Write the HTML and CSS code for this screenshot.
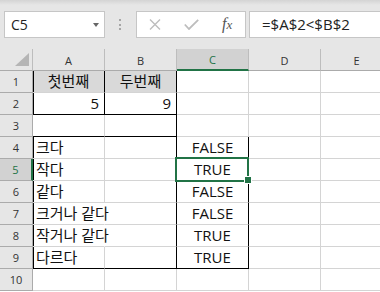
FILE: index.html
```html
<!DOCTYPE html>
<html lang="ko">
<head>
<meta charset="utf-8">
<link rel="stylesheet" href="styles.css">
</head>
<body>
<div class="app">
  <div class="toolbar">
    <div class="namebox"><span class="name">C5</span><span class="caret"></span></div>
    <div class="grip"><i></i><i></i><i></i></div>
    <div class="fxbtns">
      <svg class="ico-x" width="12" height="11" viewBox="0 0 12 11"><path d="M1 0.5 L11 10.5 M11 0.5 L1 10.5" stroke="#bdbdbd" stroke-width="1.4" fill="none"/></svg>
      <svg class="ico-ok" width="15" height="11" viewBox="0 0 15 11"><path d="M0.8 5.5 L5 10 L14.2 0.8" stroke="#bdbdbd" stroke-width="1.8" fill="none"/></svg>
      <span class="fx">f<span class="fx-x">x</span></span>
    </div>
    <div class="formula">=$A$2&lt;$B$2</div>
  </div>
  <div class="sheet">
    <div class="ch corner"><span class="tri"></span></div>
    <div class="ch">A</div>
    <div class="ch">B</div>
    <div class="ch sel">C</div>
    <div class="ch">D</div>
    <div class="ch">E</div>

    <div class="rh">1</div>
    <div class="c hd bl br">첫번째</div>
    <div class="c hd br">두번째</div>
    <div class="c"></div><div class="c"></div><div class="c"></div>

    <div class="rh">2</div>
    <div class="c num bl br bb">5</div>
    <div class="c num br bb">9</div>
    <div class="c"></div><div class="c"></div><div class="c"></div>

    <div class="rh">3</div>
    <div class="c bb"></div>
    <div class="c bb br"></div>
    <div class="c"></div><div class="c"></div><div class="c"></div>

    <div class="rh">4</div>
    <div class="c txt bl">크다</div>
    <div class="c br"></div>
    <div class="c ctr br">FALSE</div>
    <div class="c"></div><div class="c"></div>

    <div class="rh sel">5</div>
    <div class="c txt bl">작다</div>
    <div class="c br"></div>
    <div class="c ctr br active">TRUE</div>
    <div class="c"></div><div class="c"></div>

    <div class="rh">6</div>
    <div class="c txt bl">같다</div>
    <div class="c br"></div>
    <div class="c ctr br">FALSE</div>
    <div class="c"></div><div class="c"></div>

    <div class="rh">7</div>
    <div class="c txt bl over">크거나 같다</div>
    <div class="c br"></div>
    <div class="c ctr br">FALSE</div>
    <div class="c"></div><div class="c"></div>

    <div class="rh">8</div>
    <div class="c txt bl over">작거나 같다</div>
    <div class="c br"></div>
    <div class="c ctr br">TRUE</div>
    <div class="c"></div><div class="c"></div>

    <div class="rh">9</div>
    <div class="c txt bl bb">다르다</div>
    <div class="c br bb"></div>
    <div class="c ctr br bb">TRUE</div>
    <div class="c"></div><div class="c"></div>

    <div class="rh">10</div>
    <div class="c"></div><div class="c"></div><div class="c"></div><div class="c"></div><div class="c"></div>
  </div>
</div>
</body>
</html>
```
FILE: styles.css
```css
* { box-sizing: border-box; }
html, body { margin: 0; padding: 0; }
body {
  width: 380px;
  height: 292px;
  overflow: hidden;
  background: #ffffff;
  font-family: "Open Sans", "Noto Sans CJK KR", sans-serif;
}
.app { width: 380px; height: 292px; overflow: hidden; }

.toolbar {
  height: 49px;
  display: flex;
  align-items: flex-start;
  padding-top: 11px;
  background: linear-gradient(#d4d4d4 0px, #e6e6e6 5px, #e6e6e6 100%);
}
.namebox {
  margin-left: 4px;
  width: 101px;
  height: 27px;
  background: #fff;
  border: 1px solid #c6c6c6;
  display: flex;
  align-items: center;
  padding-left: 6px;
  position: relative;
}
.name { font-size: 14px; color: #222; line-height: 1; }
.caret {
  position: absolute;
  left: 88px;
  top: 11px;
  width: 0; height: 0;
  border-left: 3.5px solid transparent;
  border-right: 3.5px solid transparent;
  border-top: 4px solid #666;
}
.grip {
  width: 31px;
  height: 27px;
  display: flex;
  flex-direction: column;
  align-items: center;
  justify-content: center;
  gap: 2.5px;
  padding-right: 1px;
}
.grip i { display: block; width: 2px; height: 2px; background: #a6a6a6; }
.fxbtns {
  width: 110px;
  height: 27px;
  background: #fff;
  border: 1px solid #c6c6c6;
  display: flex;
  align-items: center;
  padding-left: 12px;
}
.ico-x { margin-top: 0px; }
.ico-ok { margin-left: 23px; }
.fx {
  margin-left: 23px;
  font-family: "Liberation Serif", serif;
  font-style: italic;
  font-size: 16px;
  color: #555;
  line-height: 1;
  margin-top: -2px;
}
.fx-x { font-size: 13px; }
.formula {
  margin-left: 3px;
  flex: 1;
  margin-right: -10px;
  height: 27px;
  background: #fff;
  border: 1px solid #c6c6c6;
  font-size: 15px;
  color: #222;
  padding-left: 12px;
  line-height: 25px;
}

.sheet {
  display: grid;
  grid-template-columns: 33px repeat(5, 72px);
  grid-auto-rows: 22px;
  width: 393px;
}
.ch, .rh {
  background: #e6e6e6;
  font-size: 11px;
  color: #333;
  display: flex;
  align-items: center;
  justify-content: center;
  border-right: 1px solid #ababab;
  border-bottom: 1px solid #ababab;
}
.ch { border-right-color: #bdbdbd; padding-top: 1px; }
.corner { position: relative; }
.tri {
  position: absolute;
  right: 3px;
  bottom: 4px;
  width: 0; height: 0;
  border-left: 14px solid transparent;
  border-bottom: 13px solid #b5b5b5;
}
.ch.sel {
  background: #d2d2d2;
  color: #217346;
  border-bottom: 2px solid #217346;
}
.rh.sel {
  background: #d2d2d2;
  color: #217346;
  border-right: 2px solid #217346;
}
.c {
  border-right: 1px solid #d4d4d4;
  border-bottom: 1px solid #d4d4d4;
  font-size: 15px;
  color: #111;
  display: flex;
  align-items: center;
  white-space: nowrap;
  line-height: 21px;
  background: #fff;
}
.c.bl { box-shadow: inset 1px 0 0 #000; }
.c.br { border-right-color: #000; }
.c.bb { border-bottom-color: #000; }
.c.hd { background: #d9d9d9; justify-content: center; padding-bottom: 1px; }
.c.num { justify-content: flex-end; padding-right: 5px; }
.c.txt { padding-left: 3px; }
.c.over { overflow: visible; border-right-color: transparent; position: relative; z-index: 1; background: transparent; }
.c.ctr { justify-content: center; }
.c.active { position: relative; }
.c.active::after {
  content: "";
  position: absolute;
  left: -2px; top: -2px; right: -1px; bottom: -2px;
  border: 2px solid #217346;
}
.c.active::before {
  content: "";
  position: absolute;
  right: -4px;
  bottom: -4px;
  width: 6px;
  height: 6px;
  background: #217346;
  border: 1px solid #fff;
  z-index: 2;
}
```
